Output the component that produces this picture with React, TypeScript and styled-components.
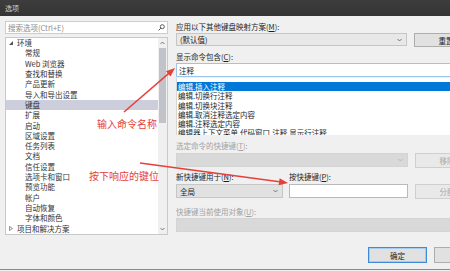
import React from "react";
import styled, { createGlobalStyle } from "styled-components";

const GlobalStyle = createGlobalStyle`
  html, body {
    margin: 0;
    padding: 0;
    overflow: hidden;
    background: #f0f0f0;
  }
`;

const Window = styled.div`
  position: relative;
  width: 500px;
  height: 269px;
  border-bottom: 1px solid #8a8a8a;
  background: #f0f0f0;
  display: flex;
  flex-direction: column;
  font-family: "Noto Sans CJK SC", "Noto Sans", sans-serif;
  font-size: 7.5px;
  color: #1e1e1e;
  overflow: hidden;
`;

const TitleBar = styled.div`
  height: 16px;
  flex-shrink: 0;
  background: linear-gradient(#3d3d3d, #343434);
  color: #cfcfcf;
  font-size: 7px;
  display: flex;
  align-items: center;
  padding-left: 5px;
`;

const Main = styled.div`
  box-sizing: border-box;
  height: 224px;
  padding: 5px 0 0 5px;
  display: grid;
  grid-template-columns: 163px 310px;
  column-gap: 8px;
`;

const LeftCol = styled.div`
  display: flex;
  flex-direction: column;
  gap: 3px;
`;

const SearchBox = styled.div`
  box-sizing: border-box;
  height: 13px;
  background: #fff;
  border: 1px solid #cdcdcd;
  display: flex;
  align-items: center;
  justify-content: space-between;
  padding: 0 2px 0 2px;
  color: #8c8c8c;
`;

const Tree = styled.div`
  box-sizing: border-box;
  height: 198px;
  background: #fff;
  border: 1px solid #c9c9c9;
  display: flex;
`;

const TreeList = styled.div`
  flex: 1;
  display: flex;
  flex-direction: column;
  color: #333;
`;

const TreeRow = styled.div<{ $level: number; $selected?: boolean }>`
  height: 10.32px;
  line-height: 10.32px;
  display: flex;
  align-items: center;
  padding-left: ${(p) => (p.$level === 0 ? 3 : 19)}px;
  background: ${(p) => (p.$selected ? "#cccedb" : "transparent")};
  white-space: nowrap;
`;

const Expander = styled.span`
  width: 8px;
  display: inline-flex;
  align-items: center;
`;

const ScrollBar = styled.div`
  width: 9px;
  display: flex;
  flex-direction: column;
  background: #f0f0f0;
`;

const ScrollArrow = styled.div`
  height: 10px;
  display: flex;
  align-items: center;
  justify-content: center;
`;

const ScrollThumb = styled.div`
  height: 75px;
  margin: 0 1px;
  background: #c2c3c9;
`;

const ScrollTrack = styled.div`
  flex: 1;
`;

const RightCol = styled.div`
  display: flex;
  flex-direction: column;
`;

const Label = styled.div<{ $disabled?: boolean; $top: number }>`
  height: 10px;
  line-height: 10px;
  margin-top: ${(p) => p.$top}px;
  color: ${(p) => (p.$disabled ? "#a2a2a2" : "#1e1e1e")};
  white-space: nowrap;
`;

const Row = styled.div<{ $top: number }>`
  display: flex;
  margin-top: ${(p) => p.$top}px;
  align-items: flex-start;
`;

const Select = styled.div<{ $w: number; $h: number; $tone: "light" | "mid" | "disabled" }>`
  box-sizing: border-box;
  width: ${(p) => p.$w}px;
  height: ${(p) => p.$h}px;
  border: 1px solid ${(p) => (p.$tone === "disabled" ? "#d4d4d4" : "#c6c6c6")};
  background: ${(p) =>
    p.$tone === "light" ? "#e8e8e8" : p.$tone === "mid" ? "#e1e1e1" : "#d9d9d9"};
  display: flex;
  align-items: center;
  justify-content: space-between;
  padding: 0 4px 0 3px;
`;

const Button = styled.div<{ $w: number; $h: number; $disabled?: boolean; $default?: boolean }>`
  box-sizing: border-box;
  width: ${(p) => p.$w}px;
  height: ${(p) => p.$h}px;
  margin-left: 7px;
  border: 1px solid
    ${(p) => (p.$default ? "#3f8ad6" : p.$disabled ? "#cfcfcf" : "#adadad")};
  box-shadow: ${(p) => (p.$default ? "inset 0 0 0 1px #a8cbee" : "none")};
  background: ${(p) => (p.$disabled ? "#e9e9e9" : "#e1e1e1")};
  color: ${(p) => (p.$disabled ? "#a8a8a8" : "#1e1e1e")};
  display: flex;
  align-items: center;
  justify-content: center;
  flex-shrink: 0;
`;

const TextInput = styled.div<{ $w?: number; $focused?: boolean }>`
  box-sizing: border-box;
  width: ${(p) => (p.$w ? `${p.$w}px` : "100%")};
  height: 14px;
  background: #fff;
  border: 1px solid ${(p) => (p.$focused ? "#9dc4ea" : "#b9b9b9")};
  display: flex;
  align-items: center;
  padding-left: 2px;
  margin-left: ${(p) => (p.$w ? 6 : 0)}px;
`;

const CommandList = styled.div`
  box-sizing: border-box;
  height: 57px;
  margin-top: 1px;
  padding-top: 4px;
  background: #fff;
  border-left: 1px solid #d6d6d6;
  display: flex;
  flex-direction: column;
  overflow: hidden;
`;

const CommandRow = styled.div<{ $selected?: boolean }>`
  flex-shrink: 0;
  height: 9.3px;
  line-height: 9.3px;
  padding-left: 1px;
  white-space: nowrap;
  background: ${(p) => (p.$selected ? "#0078d7" : "transparent")};
  color: ${(p) => (p.$selected ? "#fff" : "#1e1e1e")};
`;

const FieldLabelRow = styled.div`
  display: flex;
  margin-top: 4px;
`;

const Footer = styled.div`
  display: flex;
  justify-content: flex-end;
  padding: 7px 7px 0 0;
`;

const Overlay = styled.svg`
  position: absolute;
  left: 0;
  top: 0;
  pointer-events: none;
`;

const Note = styled.div<{ $x: number; $y: number }>`
  position: absolute;
  left: ${(p) => p.$x}px;
  top: ${(p) => p.$y}px;
  font-size: 10px;
  line-height: 12px;
  color: #e5403a;
  white-space: nowrap;
`;

const Chevron = ({ color = "#6b6b6b", up = false }: { color?: string; up?: boolean }) => (
  <svg width="5" height="4" viewBox="0 0 5 4">
    <polyline
      points={up ? "0.5,3 2.5,1 4.5,3" : "0.5,1 2.5,3 4.5,1"}
      fill="none"
      stroke={color}
      strokeWidth="0.9"
    />
  </svg>
);

const treeItems: { label: string; level: number; selected?: boolean; expander?: "open" | "closed" }[] = [
  { label: "环境", level: 0, expander: "open" },
  { label: "常规", level: 1 },
  { label: "Web 浏览器", level: 1 },
  { label: "查找和替换", level: 1 },
  { label: "产品更新", level: 1 },
  { label: "导入和导出设置", level: 1 },
  { label: "键盘", level: 1, selected: true },
  { label: "扩展", level: 1 },
  { label: "启动", level: 1 },
  { label: "区域设置", level: 1 },
  { label: "任务列表", level: 1 },
  { label: "文档", level: 1 },
  { label: "信任设置", level: 1 },
  { label: "选项卡和窗口", level: 1 },
  { label: "预览功能", level: 1 },
  { label: "帐户", level: 1 },
  { label: "自动恢复", level: 1 },
  { label: "字体和颜色", level: 1 },
  { label: "项目和解决方案", level: 0, expander: "closed" },
];

const commands = [
  "编辑.插入注释",
  "编辑.切换行注释",
  "编辑.切换块注释",
  "编辑.取消注释选定内容",
  "编辑.注释选定内容",
  "编辑器上下文菜单.代码窗口.注释.显示行注释",
];

export default function App() {
  return (
    <>
      <GlobalStyle />
      <Window>
        <TitleBar>选项</TitleBar>
        <Main>
          <LeftCol>
            <SearchBox>
              <span>搜索选项(Ctrl+E)</span>
              <svg width="7" height="7" viewBox="0 0 7 7">
                <circle cx="4.3" cy="2.7" r="2" fill="none" stroke="#4a4a4a" strokeWidth="0.9" />
                <line x1="2.8" y1="4.2" x2="0.6" y2="6.4" stroke="#4a4a4a" strokeWidth="1" />
              </svg>
            </SearchBox>
            <Tree>
              <TreeList>
                {treeItems.map((item) => (
                  <TreeRow key={item.label} $level={item.level} $selected={item.selected}>
                    {item.level === 0 && (
                      <Expander>
                        {item.expander === "open" ? (
                          <svg width="4" height="4" viewBox="0 0 4 4">
                            <polygon points="4,0 4,4 0,4" fill="#555" />
                          </svg>
                        ) : (
                          <svg width="4" height="5" viewBox="0 0 4 5">
                            <polygon points="0.5,0.5 3.5,2.5 0.5,4.5" fill="none" stroke="#777" strokeWidth="0.8" />
                          </svg>
                        )}
                      </Expander>
                    )}
                    {item.label}
                  </TreeRow>
                ))}
              </TreeList>
              <ScrollBar>
                <ScrollArrow>
                  <Chevron up />
                </ScrollArrow>
                <ScrollThumb />
                <ScrollTrack />
                <ScrollArrow>
                  <Chevron />
                </ScrollArrow>
              </ScrollBar>
            </Tree>
          </LeftCol>

          <RightCol>
            <Label $top={1}>
              应用以下其他键盘映射方案(<u>M</u>):
            </Label>
            <Row $top={1}>
              <Select $w={231} $h={13} $tone="light">
                <span>(默认值)</span>
                <Chevron />
              </Select>
              <Button $w={64} $h={14}>重置</Button>
            </Row>

            <Label $top={5}>
              显示命令包含(<u>C</u>):
            </Label>
            <Row $top={1}>
              <TextInput $focused>注释</TextInput>
            </Row>
            <CommandList>
              {commands.map((c, i) => (
                <CommandRow key={c} $selected={i === 0}>
                  {c}
                </CommandRow>
              ))}
            </CommandList>

            <Label $top={6} $disabled>
              选定命令的快捷键(<u>T</u>):
            </Label>
            <Row $top={2}>
              <Select $w={232} $h={14} $tone="disabled">
                <span />
                <Chevron color="#b5b5b5" />
              </Select>
              <Button $w={64} $h={15} $disabled>移除</Button>
            </Row>

            <FieldLabelRow>
              <Label $top={0} style={{ width: 113 }}>
                新快捷键用于(<u>N</u>):
              </Label>
              <Label $top={0}>
                按快捷键(<u>P</u>):
              </Label>
            </FieldLabelRow>
            <Row $top={2}>
              <Select $w={107} $h={14} $tone="mid">
                <span>全局</span>
                <Chevron />
              </Select>
              <TextInput $w={119} />
              <Button $w={64} $h={15} $disabled>分配</Button>
            </Row>

            <Label $top={8} $disabled>
              快捷键当前使用对象(<u>U</u>):
            </Label>
            <Row $top={1}>
              <Select $w={310} $h={14} $tone="disabled" />
            </Row>
          </RightCol>
        </Main>

        <Footer>
          <Button $w={59} $h={16} $default>确定</Button>
          <Button $w={59} $h={16}>取消</Button>
        </Footer>

        <Overlay width="450" height="271" viewBox="0 0 450 271">
          <line x1="124" y1="112" x2="168.5" y2="73.6" stroke="#e5403a" strokeWidth="1.5" />
          <polygon points="175,68 170.5,76.5 165.9,71.2" fill="#e5403a" />
          <line x1="140" y1="163" x2="279.5" y2="181.8" stroke="#e5403a" strokeWidth="1.5" />
          <polygon points="288,183 278.6,185.3 279.6,178.3" fill="#e5403a" />
        </Overlay>
        <Note $x={97} $y={118}>输入命令名称</Note>
        <Note $x={89} $y={170}>按下响应的键位</Note>
      </Window>
    </>
  );
}
